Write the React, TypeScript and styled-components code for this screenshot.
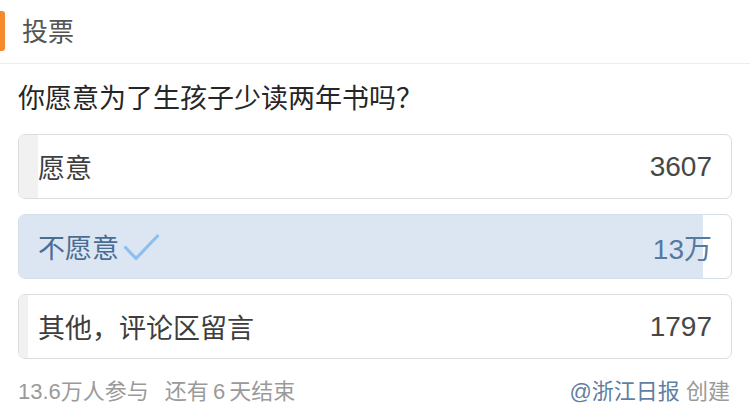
import React from "react";
import styled, { createGlobalStyle } from "styled-components";

const GlobalStyle = createGlobalStyle`
  html, body {
    margin: 0;
    padding: 0;
    background: #ffffff;
  }
  body {
    font-family: "Liberation Sans", "Noto Sans CJK SC", sans-serif;
    -webkit-font-smoothing: antialiased;
  }
`;

const Page = styled.div`
  width: 750px;
  height: 415px;
  background: #ffffff;
  overflow: hidden;
  box-sizing: border-box;
`;

const Header = styled.div`
  display: flex;
  align-items: center;
  height: 63px;
  border-bottom: 1px solid #ececec;
`;

const Marker = styled.div`
  width: 5px;
  height: 40px;
  background: #f5892e;
  border-radius: 0 3px 3px 0;
  margin-top: -2px;
`;

const HeaderTitle = styled.div`
  margin-left: 17px;
  font-size: 26px;
  line-height: 30px;
  color: #555555;
`;

const Question = styled.div`
  margin: 17px 18px 0;
  font-size: 27px;
  line-height: 36px;
  color: #262626;
`;

const Options = styled.div`
  display: flex;
  flex-direction: column;
  gap: 15px;
  margin: 17px 18px 0;
  width: 714px;
`;

const Option = styled.div<{ $chosen?: boolean }>`
  position: relative;
  height: 65px;
  box-sizing: border-box;
  border: 1px solid ${(p) => (p.$chosen ? "#d5dde7" : "#dddddd")};
  border-radius: 7px;
  overflow: hidden;
  background: #ffffff;
`;

const Fill = styled.div<{ $chosen?: boolean }>`
  position: absolute;
  left: 0;
  top: 0;
  bottom: 0;
  background: ${(p) => (p.$chosen ? "#dce6f3" : "#f1f1f1")};
`;

const OptionRow = styled.div<{ $chosen?: boolean }>`
  position: relative;
  display: flex;
  align-items: center;
  justify-content: space-between;
  height: 100%;
  padding: 0 19px 0 19px;
  font-size: 27px;
  color: ${(p) => (p.$chosen ? "#4a6d93" : "#3e3e3e")};
`;

const Label = styled.div`
  display: flex;
  align-items: center;
  gap: 5px;
`;

const Count = styled.div<{ $chosen?: boolean }>`
  font-size: 28px;
  color: ${(p) => (p.$chosen ? "#5579a1" : "#474747")};
`;

const Footer = styled.div`
  display: flex;
  justify-content: space-between;
  align-items: center;
  margin: 15px 20px 0 18px;
  height: 30px;
  font-size: 22px;
  color: #9a9a9a;
`;

const FooterLeft = styled.div`
  display: flex;
  gap: 16px;
`;

const Spaced = styled.span`
  word-spacing: -2px;
`;

const Author = styled.span`
  color: #5f7fa3;
`;

const Check = () => (
  <svg width="35" height="27" viewBox="0 0 35 27" style={{ display: "block", marginTop: 2 }}>
    <path
      d="M1.5 13.5 L12 24.5 L33.5 2"
      fill="none"
      stroke="#8fbff0"
      strokeWidth="3.2"
      strokeLinecap="round"
      strokeLinejoin="round"
    />
  </svg>
);

const options = [
  { label: "愿意", count: "3607", votes: 3607 },
  { label: "不愿意", count: "13万", votes: 130000, chosen: true },
  { label: "其他，评论区留言", count: "1797", votes: 1797 },
];

const total = options.reduce((s, o) => s + o.votes, 0);

export default function App() {
  return (
    <Page>
      <GlobalStyle />
      <Header>
        <Marker />
        <HeaderTitle>投票</HeaderTitle>
      </Header>
      <Question>你愿意为了生孩子少读两年书吗？</Question>
      <Options>
        {options.map((o) => (
          <Option key={o.label} $chosen={o.chosen}>
            <Fill $chosen={o.chosen} style={{ width: `${(o.votes / total) * 100}%` }} />
            <OptionRow $chosen={o.chosen}>
              <Label>
                {o.label}
                {o.chosen && <Check />}
              </Label>
              <Count $chosen={o.chosen}>{o.count}</Count>
            </OptionRow>
          </Option>
        ))}
      </Options>
      <Footer>
        <FooterLeft>
          <span>13.6万人参与</span>
          <Spaced>还有 6 天结束</Spaced>
        </FooterLeft>
        <div>
          <Author>@浙江日报</Author> 创建
        </div>
      </Footer>
    </Page>
  );
}
